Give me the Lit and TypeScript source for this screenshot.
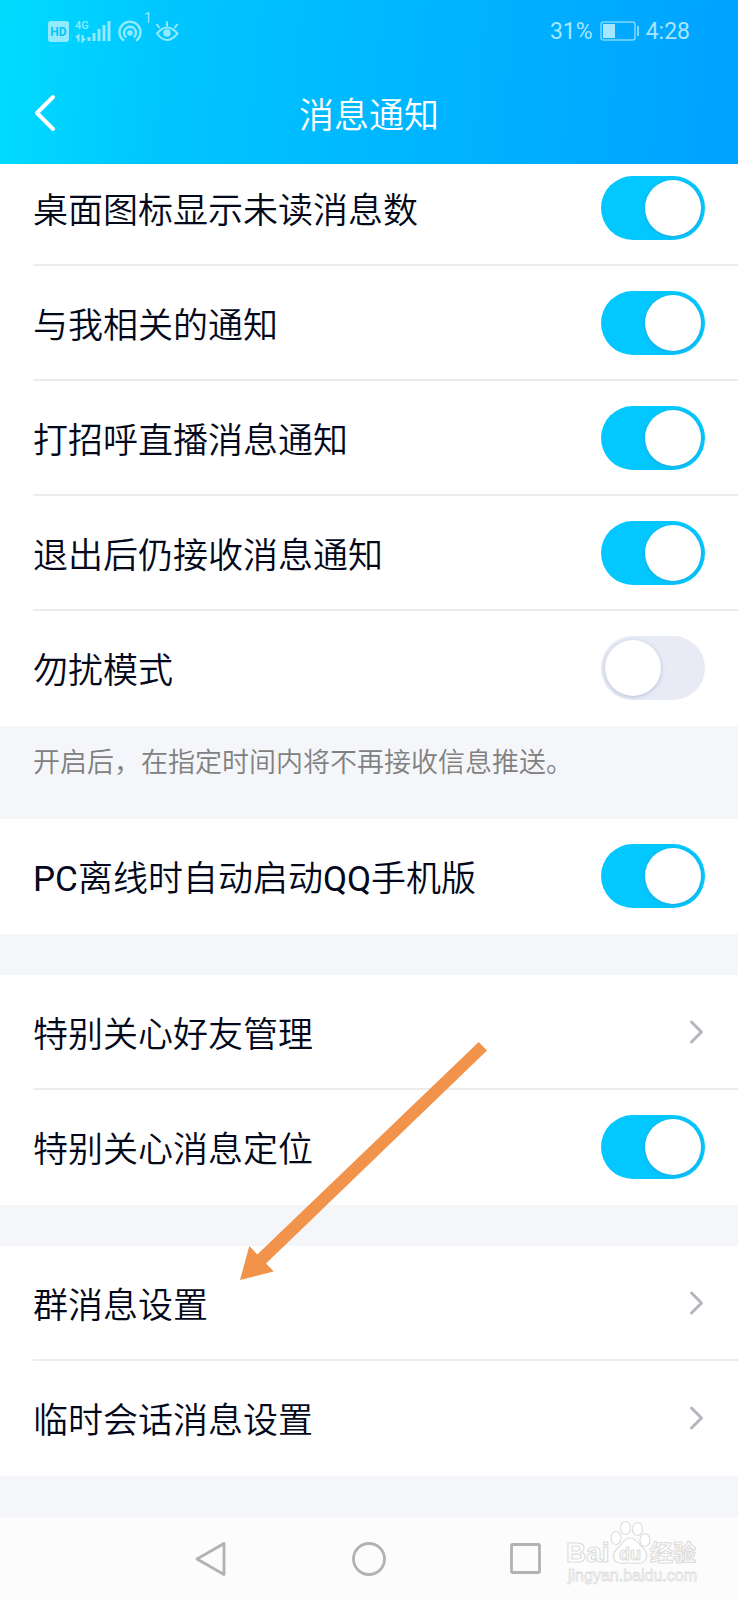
import { LitElement, html, svg, css } from "lit";
import { customElement, property, state } from "lit/decorators.js";

interface Item {
  id: string;
  label: string;
  kind: "switch" | "link";
  on?: boolean;
}

interface Group {
  items: Item[];
  note?: string;
}

const GROUPS: Group[] = [
  {
    items: [
      { id: "badge", label: "桌面图标显示未读消息数", kind: "switch", on: true },
      { id: "related", label: "与我相关的通知", kind: "switch", on: true },
      { id: "live", label: "打招呼直播消息通知", kind: "switch", on: true },
      { id: "exit", label: "退出后仍接收消息通知", kind: "switch", on: true },
      { id: "dnd", label: "勿扰模式", kind: "switch", on: false },
    ],
    note: "开启后，在指定时间内将不再接收信息推送。",
  },
  { items: [{ id: "pc", label: "PC离线时自动启动QQ手机版", kind: "switch", on: true }] },
  {
    items: [
      { id: "care", label: "特别关心好友管理", kind: "link" },
      { id: "locate", label: "特别关心消息定位", kind: "switch", on: true },
    ],
  },
  {
    items: [
      { id: "group", label: "群消息设置", kind: "link" },
      { id: "temp", label: "临时会话消息设置", kind: "link" },
    ],
  },
];

/* Latin runs take a heavier weight, so that they match the Chinese strokes. */
const mixed = (text: string) =>
  text
    .split(/([A-Za-z]+)/)
    .filter(Boolean)
    .map((part) => (/^[A-Za-z]/.test(part) ? html`<span class="latin">${part}</span>` : part));

@customElement("status-bar")
class StatusBar extends LitElement {
  static styles = css`
    :host {
      display: flex;
      align-items: center;
      justify-content: space-between;
      height: 62px;
      padding: 0 48px;
      color: #a6e6ff;
      font: 23px/28px Roboto, sans-serif;
    }
    .side {
      display: flex;
      align-items: center;
      gap: 7px;
    }
    .value {
      padding-top: 2px;
    }
    .icons {
      display: block;
    }
    .tiny {
      font: 500 11px Roboto, sans-serif;
    }
    .hd {
      font: 700 12px Roboto, sans-serif;
    }
    .one {
      font: 400 14px Roboto, sans-serif;
    }
  `;

  render() {
    return html`
      <div class="side">
        <svg class="icons" width="132" height="62" viewBox="0 0 132 62" fill="none" stroke="#92eaff" stroke-width="2">
          <rect x="0" y="21" width="21" height="21" rx="3" fill="#92eaff" stroke="none" />
          <text class="hd" x="10.5" y="36" text-anchor="middle" fill="#08c3f8" stroke="none">HD</text>
          <text class="tiny" x="27" y="29" fill="#92eaff" stroke="none">4G</text>
          <path d="M28 37.500l2.500-2v6M34.500 35v6l2.500-2.500" />
          <path d="M41 41v-4M46 41v-8M51 41v-12M56 41v-16M61 41v-20" stroke-width="3" />
          <g stroke-width="2.400">
            <circle cx="82" cy="33" r="2.800" fill="#92eaff" stroke="none" />
            <path d="M78.300 37.500a6 6 0 1 1 7.400 0" />
            <path d="M76 40.800a10.500 10.500 0 1 1 12 0" />
          </g>
          <text class="one" x="96" y="23" fill="#92eaff" stroke="none">1</text>
          <path d="M109 33.500q10-12 20.500 0q-10.500 13-20.500 0z" />
          <circle cx="119" cy="33" r="3.800" fill="#92eaff" stroke="none" />
          <path d="M119 26.500v-5M111.500 28l-3-4M126.500 28l3-4" />
        </svg>
      </div>
      <div class="side">
        <span class="value">31%</span>
        <svg class="icons" width="39" height="20" viewBox="0 0 39 20" fill="none" stroke="#7fd6ff" stroke-width="1.500">
          <rect x="1" y="1" width="34" height="18" rx="2.500" />
          <rect x="3" y="3" width="12" height="14" fill="#a6e6ff" stroke="none" />
          <path d="M38 5v10" stroke-width="2" />
        </svg>
        <span class="value">4:28</span>
      </div>
    `;
  }
}

@customElement("setting-row")
class SettingRow extends LitElement {
  @property({ attribute: false }) item!: Item;
  @state() private on = false;

  static styles = css`
    :host {
      display: block;
      padding-left: 33px;
      background: #fff;
    }
    .row {
      display: flex;
      align-items: center;
      justify-content: space-between;
      box-sizing: border-box;
      height: 115px;
      padding-right: 33px;
      border-bottom: 2px solid transparent;
      color: #03081a;
      text-decoration: none;
    }
    :host([divided]) .row {
      border-bottom-color: #ebecef;
    }
    .label {
      padding-top: 8px;
      font-size: 35px;
      line-height: 48px;
    }
    .latin {
      font-weight: 400;
    }
    .switch {
      appearance: none;
      flex: none;
      box-sizing: border-box;
      width: 104px;
      height: 64px;
      margin: 0;
      padding: 4px;
      border-radius: 32px;
      background: #e8ebf6;
      cursor: pointer;
    }
    .switch::before {
      content: "";
      display: block;
      width: 56px;
      height: 56px;
      border-radius: 50%;
      background: #fff;
      box-shadow: 0 1px 4px rgba(90, 110, 160, 0.35);
    }
    .switch:checked {
      background: #02c8ff;
    }
    .switch:checked::before {
      margin-left: auto;
    }
    .chevron {
      display: block;
      margin-right: 1px;
    }
  `;

  willUpdate(changed: Map<string, unknown>) {
    if (changed.has("item")) this.on = !!this.item.on;
  }

  render() {
    const { id, label, kind } = this.item;
    if (kind === "link") {
      return html`<a class="row" href="#${id}">
        <span class="label">${mixed(label)}</span>
        <svg class="chevron" width="16" height="26" viewBox="0 0 16 26" fill="none" stroke="#b3b6bf" stroke-width="3" stroke-linecap="round" stroke-linejoin="round" aria-hidden="true">
          <path d="M3.500 3L13.500 13L3.500 23" />
        </svg>
      </a>`;
    }
    return html`<div class="row">
      <label class="label" for=${id}>${mixed(label)}</label>
      <input
        class="switch"
        id=${id}
        type="checkbox"
        role="switch"
        .checked=${this.on}
        @change=${(e: Event) => (this.on = (e.target as HTMLInputElement).checked)}
      />
    </div>`;
  }
}

const navIcons = [
  { name: "返回", shape: svg`<path d="M30 2.500v31L3 18z" />` },
  { name: "主屏幕", shape: svg`<circle cx="18" cy="18" r="15.500" />` },
  { name: "最近任务", shape: svg`<rect x="3.500" y="3.500" width="28" height="28" rx="1" />` },
];

@customElement("nav-bar")
class NavBar extends LitElement {
  static styles = css`
    :host {
      position: relative;
      display: flex;
      justify-content: center;
      align-items: center;
      gap: 121px;
      height: 84px;
      background: #fcfcfc;
    }
    .key {
      padding: 0;
      border: 0;
      background: none;
    }
    .icon {
      display: block;
    }
    .mark {
      position: absolute;
      right: 34px;
      bottom: 12px;
    }
    .brand {
      font: 700 28px "Liberation Sans", sans-serif;
    }
    .du {
      font: 700 18px "Liberation Sans", sans-serif;
    }
    .cn {
      font: 700 23px "Noto Sans CJK SC", sans-serif;
    }
    .site {
      font: 400 16px "Liberation Sans", sans-serif;
    }
  `;

  render() {
    return html`
      ${navIcons.map(
        (n) => html`<button class="key" aria-label=${n.name}>
          <svg class="icon" width="36" height="36" viewBox="0 0 36 36" fill="none" stroke="#b2b2b2" stroke-width="2.800" stroke-linejoin="round">
            ${n.shape}
          </svg>
        </button>`
      )}
      <svg class="mark" width="140" height="70" viewBox="0 0 140 70" fill="#fff" stroke="#dedede" stroke-width="1.200">
        <text class="brand" x="2" y="43">Bai</text>
        <ellipse cx="52" cy="19" rx="5" ry="6.500" />
        <ellipse cx="61.500" cy="9" rx="5" ry="6.500" />
        <ellipse cx="73.500" cy="10" rx="5" ry="6.500" />
        <ellipse cx="81" cy="21" rx="5" ry="6.500" />
        <path d="M66 19c6 0 8 5 12 9c4 4 6 7 4 12c-3 6-9 4-16 4s-13 2-16-4c-2-5 1-8 5-12c4-4 5-9 11-9z" />
        <text class="du" x="55" y="41">du</text>
        <text class="cn" x="86" y="42">经验</text>
        <text class="site" x="4" y="62" stroke-width="0.800">jingyan.baidu.com</text>
      </svg>
    `;
  }
}

@customElement("app-root")
class AppRoot extends LitElement {
  static styles = css`
    :host {
      display: flex;
      flex-direction: column;
      min-height: 100vh;
      background: #f4f6fa;
      font-family: Roboto, "Noto Sans CJK SC", sans-serif;
      font-weight: 350;
    }
    .head {
      position: relative;
      z-index: 1;
      background: linear-gradient(95deg, #00dcff, #00c6ff 22%, #00b6ff 55%, #00a2ff);
    }
    .bar {
      display: grid;
      grid-template-columns: 1fr auto 1fr;
      align-items: center;
      height: 102px;
      padding: 0 33px;
      color: #fff;
    }
    .back {
      justify-self: start;
      padding: 0;
      border: 0;
      background: none;
    }
    .icon {
      display: block;
    }
    .title {
      margin: 0;
      padding-top: 8px;
      font-size: 35px;
      line-height: 48px;
      font-weight: inherit;
    }
    /* The list is scrolled slightly under the header. */
    .list {
      position: relative;
      flex: 1;
      margin-top: -13px;
    }
    .group {
      margin-bottom: 41px;
    }
    .group.noted {
      margin-bottom: 0;
    }
    .note {
      margin: 0;
      padding: 19px 33px 38px;
      color: #808080;
      font-size: 27px;
      line-height: 36px;
    }
    .arrow {
      position: absolute;
      left: 240px;
      bottom: 237px;
      pointer-events: none;
    }
  `;

  render() {
    return html`
      <header class="head">
        <status-bar></status-bar>
        <div class="bar">
          <button class="back" aria-label="返回">
            <svg class="icon" width="24" height="40" viewBox="0 0 24 40" fill="none" stroke="#fff" stroke-width="4" stroke-linecap="round" stroke-linejoin="round">
              <path d="M20 4L4 20L20 36" />
            </svg>
          </button>
          <h1 class="title">消息通知</h1>
        </div>
      </header>
      <main class="list">
        ${GROUPS.map(
          (g) => html`
            <section class="group ${g.note ? "noted" : ""}">
              ${g.items.map(
                (item, i) => html`<setting-row .item=${item} ?divided=${i < g.items.length - 1}></setting-row>`
              )}
            </section>
            ${g.note ? html`<p class="note">${g.note}</p>` : ""}
          `
        )}
        <svg class="arrow" width="248" height="239" viewBox="0 0 248 239" fill="#f2934b" aria-hidden="true">
          <path d="M238.700 1L247 9.500L26 222.500L33.700 230.500L0 239L9.300 205L17.300 213.500z" />
        </svg>
      </main>
      <nav-bar></nav-bar>
    `;
  }
}
